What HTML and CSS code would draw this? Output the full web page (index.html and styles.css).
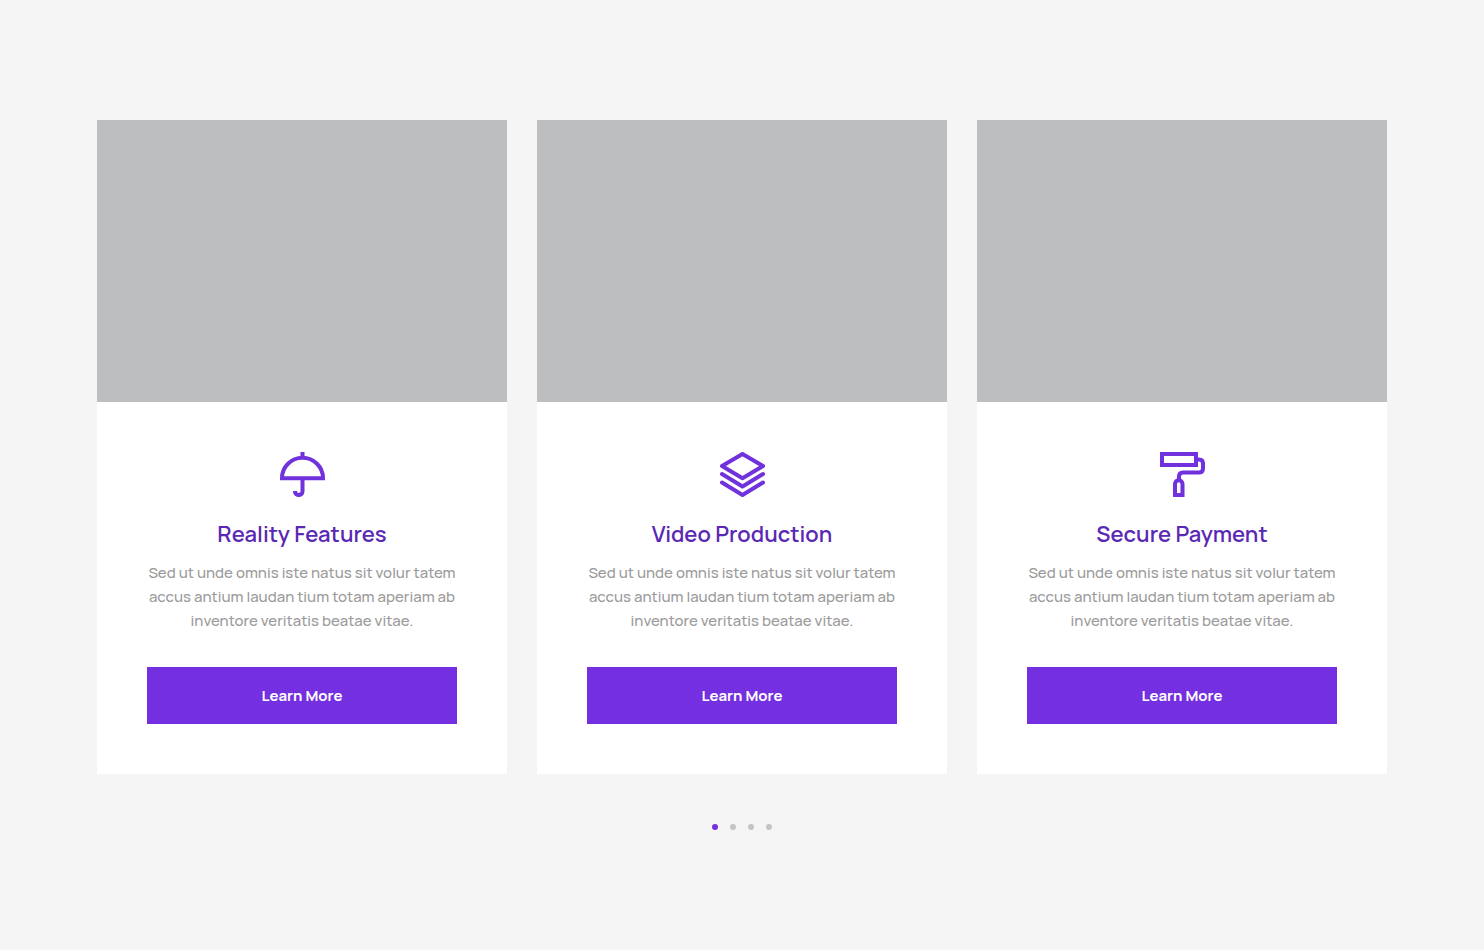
FILE: index.html
```html
<!DOCTYPE html>
<html lang="en">
<head>
  <meta charset="UTF-8">
  <meta name="viewport" content="width=device-width, initial-scale=1.0">
  <title>Services</title>
  <link rel="stylesheet" href="styles.css">
</head>
<body>
  <section class="services">
    <div class="services__list">
      <article class="card">
        <div class="card__image"></div>
        <div class="card__body">
          <svg class="card__icon" viewBox="0 0 45 45" aria-hidden="true">
            <path d="M22.5 0v5M2 26.2a20.5 20.4 0 0 1 41 0zM22.5 26v13.6c0 4.600-7.500 4.600-7.500 0v-.6"/>
          </svg>
          <h3 class="card__title">Reality Features</h3>
          <p class="card__text">Sed ut unde omnis iste natus sit volur tatem accus antium laudan tium totam aperiam ab inventore veritatis beatae vitae.</p>
          <a href="#" class="card__btn">Learn More</a>
        </div>
      </article>

      <article class="card">
        <div class="card__image"></div>
        <div class="card__body">
          <svg class="card__icon card__icon--round" viewBox="0 0 45 45" aria-hidden="true">
            <path d="M22.5 2L43 14 22.5 26.2 2 14zM2 22l20.5 12.5L43 22M2 30.5L22.5 43 43 30.5"/>
          </svg>
          <h3 class="card__title">Video Production</h3>
          <p class="card__text">Sed ut unde omnis iste natus sit volur tatem accus antium laudan tium totam aperiam ab inventore veritatis beatae vitae.</p>
          <a href="#" class="card__btn">Learn More</a>
        </div>
      </article>

      <article class="card">
        <div class="card__image"></div>
        <div class="card__body">
          <svg class="card__icon" viewBox="0 0 45 45" aria-hidden="true">
            <path d="M2 2h34v11H2zM37 7.5h2c2.5 0 4 1.5 4 4v5c0 2.5-1.5 4-4 4H23c-2.5 0-4 1.5-4 4V28M15 43V32c0-5 7.5-5 7.5 0v11z"/>
          </svg>
          <h3 class="card__title">Secure Payment</h3>
          <p class="card__text">Sed ut unde omnis iste natus sit volur tatem accus antium laudan tium totam aperiam ab inventore veritatis beatae vitae.</p>
          <a href="#" class="card__btn">Learn More</a>
        </div>
      </article>
    </div>

    <div class="dots">
      <button type="button" class="dots__item dots__item--active" aria-label="Slide 1"></button>
      <button type="button" class="dots__item" aria-label="Slide 2"></button>
      <button type="button" class="dots__item" aria-label="Slide 3"></button>
      <button type="button" class="dots__item" aria-label="Slide 4"></button>
    </div>
  </section>
</body>
</html>
```
FILE: styles.css
```css
* {
  margin: 0;
  padding: 0;
  box-sizing: border-box;
}

body {
  background: #f5f5f5;
  font-family: Manrope, Inter, sans-serif;
}

.services {
  max-width: 1320px;
  margin: 0 auto;
  padding: 120px 15px;
}

.services__list {
  display: grid;
  grid-template-columns: repeat(3, 1fr);
  gap: 30px;
}

/* Card */

.card {
  background: #fff;
  text-align: center;
}

.card__image {
  aspect-ratio: 410 / 282;
  background: #bdbec0;
}

.card__body {
  padding: 50px;
}

.card__icon {
  display: block;
  width: 45px;
  height: 45px;
  margin: 0 auto 22px;
  fill: none;
  stroke: #7131dc;
  stroke-width: 4;
}

.card__icon--round {
  stroke-linecap: round;
  stroke-linejoin: round;
}

.card__title {
  margin-bottom: 12px;
  color: #5a28b4;
  font-size: 22px;
  font-weight: 600;
  line-height: 30px;
}

.card__text {
  margin-bottom: 34px;
  color: #9b9b9b;
  font-size: 15px;
  font-weight: 500;
  line-height: 24px;
}

.card__btn {
  display: block;
  padding: 18px;
  background: #7430e0;
  color: #fff;
  font-size: 15px;
  font-weight: 700;
  line-height: 21px;
  text-decoration: none;
}

/* Dots */

.dots {
  display: flex;
  justify-content: center;
  gap: 12px;
  margin-top: 50px;
}

.dots__item {
  width: 6px;
  height: 6px;
  border: 0;
  border-radius: 50%;
  background: #c4c4c4;
  cursor: pointer;
}

.dots__item--active {
  background: #7430e0;
}
```
